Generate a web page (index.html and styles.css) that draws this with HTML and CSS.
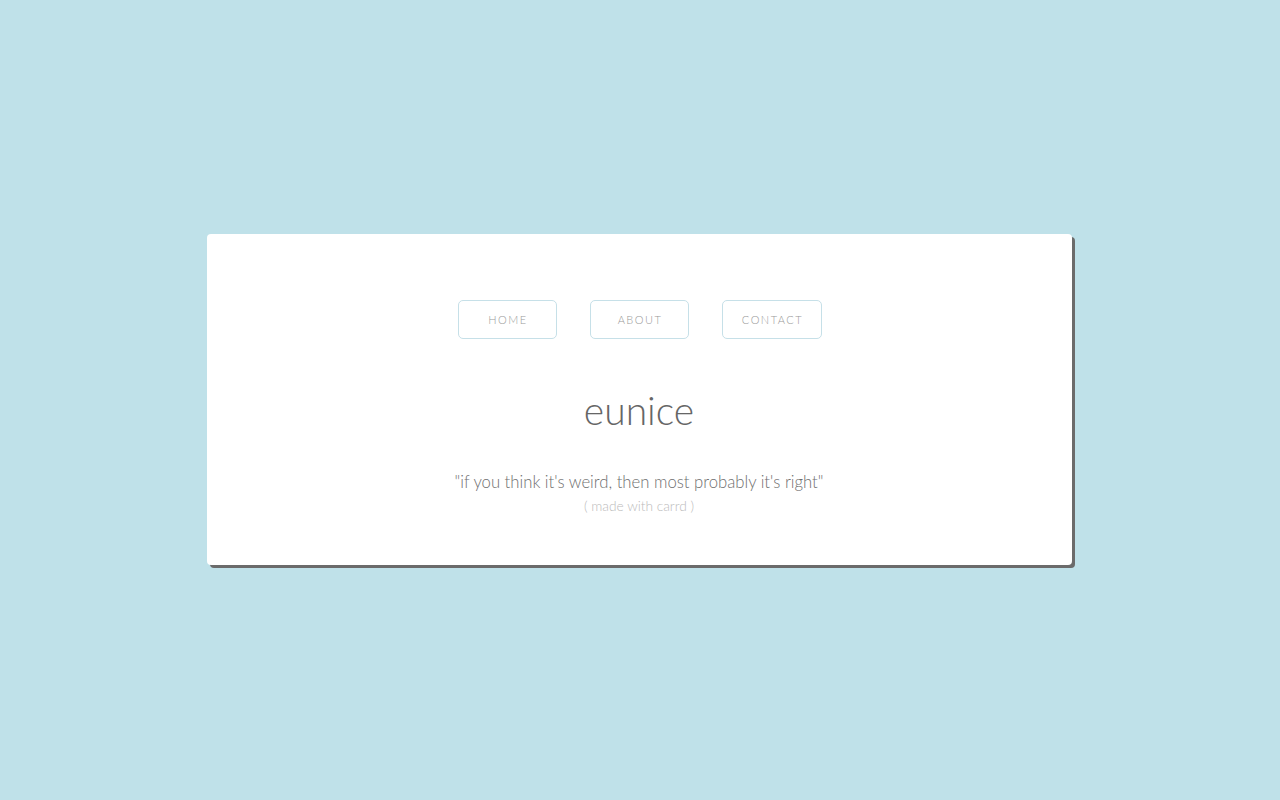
FILE: index.html
```html
<!DOCTYPE html>
<html lang="en">
<head>
<meta charset="utf-8">
<title>eunice</title>
<link rel="stylesheet" href="styles.css">
</head>
<body>
<main class="page">
  <section class="card">
    <nav class="nav">
      <a class="btn" href="#">HOME</a>
      <a class="btn" href="#">ABOUT</a>
      <a class="btn btn-wide" href="#">CONTACT</a>
    </nav>
    <h1 class="title">eunice</h1>
    <p class="quote">"if you think it's weird, then most probably it's right"</p>
    <p class="credit">( made with carrd )</p>
  </section>
</main>
</body>
</html>
```

FILE: styles.css
```css
html, body {
  margin: 0;
  padding: 0;
  height: 100%;
}
body {
  background: #bfe1e9;
  font-family: Lato, "Open Sans", sans-serif;
  font-weight: 300;
}
.page {
  height: 800px;
  display: flex;
  align-items: flex-start;
  justify-content: center;
  padding-top: 234px;
  padding-right: 2px;
  box-sizing: border-box;
}
.card {
  width: 865px;
  height: 331px;
  box-sizing: border-box;
  background: #fff;
  border-radius: 4px;
  box-shadow: 3px 3px 0 #6b6b6b;
  display: flex;
  flex-direction: column;
  align-items: center;
  padding-top: 66px;
}
.nav {
  display: flex;
  gap: 33px;
  margin-left: 1px;
}
.btn {
  width: 99px;
  height: 39px;
  box-sizing: border-box;
  border: 1px solid #c6e0e8;
  border-radius: 5px;
  display: flex;
  align-items: center;
  justify-content: center;
  font-size: 11px;
  letter-spacing: 1.5px;
  color: #999;
  text-decoration: none;
  font-weight: 300;
  padding-left: 2px;
}
.btn-wide {
  width: 100px;
}
.title {
  margin: 47px 0 0 0;
  font-size: 39px;
  font-weight: 300;
  color: #666;
  line-height: 48px;
}
.quote {
  margin: 36px 0 0 0;
  font-size: 16.7px;
  color: #6f6f6f;
  line-height: 24px;
}
.credit {
  margin: 0;
  font-size: 13.75px;
  color: #bbb;
  line-height: 24px;
}
```
